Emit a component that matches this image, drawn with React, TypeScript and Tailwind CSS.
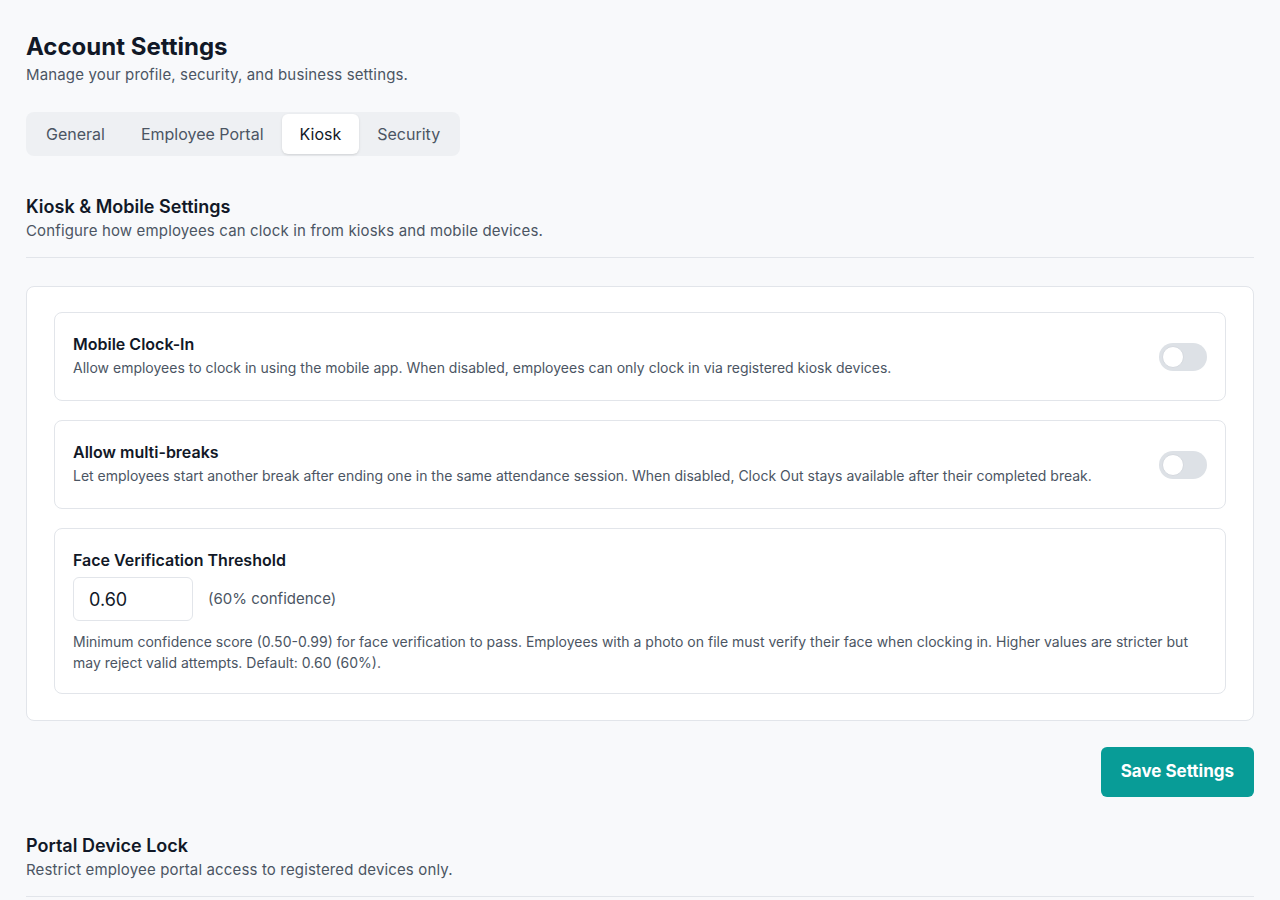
import { useState } from "react";

const tabs = ["General", "Employee Portal", "Kiosk", "Security"];

function Toggle({ on, onChange }: { on: boolean; onChange: (v: boolean) => void }) {
  return (
    <button
      type="button"
      onClick={() => onChange(!on)}
      className={`mt-1 flex h-7 w-12 shrink-0 items-center rounded-full p-[3px] ${on ? "justify-end bg-[#089c97]" : "justify-start bg-[#dde1e6]"}`}
    >
      <span className="h-[22px] w-[22px] rounded-full border border-[#d5d9df] bg-white" />
    </button>
  );
}

function ToggleRow({ title, text }: { title: string; text: string }) {
  const [on, setOn] = useState(false);
  return (
    <div className="flex items-center justify-between gap-6 rounded-lg border border-[#e2e5ea] px-[18px] pt-[19px] pb-[22px]">
      <div>
        <h3 className="text-base leading-6 font-semibold text-[#111827]">{title}</h3>
        <p className="mt-0.5 text-sm leading-5 text-[#4b5563]">{text}</p>
      </div>
      <Toggle on={on} onChange={setOn} />
    </div>
  );
}

export default function App() {
  const [active, setActive] = useState("Kiosk");
  const [threshold, setThreshold] = useState("0.60");

  return (
    <main className="min-h-screen bg-[#f8f9fb] px-[26px] pt-[31px] pb-10 font-['Inter',sans-serif] text-[#111827]">
      {/* Header */}
      <h1 className="text-2xl leading-8 font-bold">Account Settings</h1>
      <p className="mt-0.5 text-[15px] leading-5 tracking-[0.01em] text-[#4b5563]">
        Manage your profile, security, and business settings.
      </p>

      {/* Tabs */}
      <div className="mt-[27px] inline-flex rounded-lg bg-[#eef0f3] p-0.5">
        {tabs.map((t) => (
          <button
            key={t}
            onClick={() => setActive(t)}
            className={`h-10 rounded-md px-[18px] text-base ${
              active === t ? "bg-white text-[#111827] shadow-sm" : "text-[#4b5563]"
            }`}
          >
            {t}
          </button>
        ))}
      </div>

      {/* Kiosk & Mobile */}
      <section className="mt-[37px]">
        <div className="border-b border-[#e2e5ea] pb-4">
          <h2 className="text-lg leading-7 font-semibold">Kiosk &amp; Mobile Settings</h2>
          <p className="text-[15px] leading-5 tracking-[0.01em] text-[#4b5563]">
            Configure how employees can clock in from kiosks and mobile devices.
          </p>
        </div>

        <div className="mt-[28px] flex flex-col gap-[19px] rounded-lg border border-[#e2e5ea] bg-white px-[27px] pt-[25px] pb-[26px]">
          <ToggleRow
            title="Mobile Clock-In"
            text="Allow employees to clock in using the mobile app. When disabled, employees can only clock in via registered kiosk devices."
          />
          <ToggleRow
            title="Allow multi-breaks"
            text="Let employees start another break after ending one in the same attendance session. When disabled, Clock Out stays available after their completed break."
          />

          <div className="rounded-lg border border-[#e2e5ea] px-[18px] pt-[19px] pb-5">
            <h3 className="text-base leading-6 font-semibold">Face Verification Threshold</h3>
            <div className="mt-[5px] flex items-center gap-[15px]">
              <input
                value={threshold}
                onChange={(e) => setThreshold(e.target.value)}
                className="h-11 w-[120px] rounded-md border border-[#e2e5ea] px-[15px] text-lg text-[#111827] outline-none"
              />
              <span className="text-[15px] text-[#4b5563]">(60% confidence)</span>
            </div>
            <p className="mt-2.5 text-sm leading-[21px] text-[#4b5563]">
              Minimum confidence score (0.50-0.99) for face verification to pass. Employees with a photo on file must verify their face when clocking in. Higher values are stricter but may reject valid attempts. Default: 0.60 (60%).
            </p>
          </div>
        </div>

        <div className="mt-[26px] flex justify-end">
          <button className="h-[50px] rounded-md bg-[#089c97] px-5 text-[17px] font-bold text-white">
            Save Settings
          </button>
        </div>
      </section>

      {/* Portal Device Lock */}
      <section className="mt-[35px]">
        <div className="border-b border-[#e2e5ea] pb-4">
          <h2 className="text-lg leading-7 font-semibold">Portal Device Lock</h2>
          <p className="text-[15px] leading-5 tracking-[0.01em] text-[#4b5563]">
            Restrict employee portal access to registered devices only.
          </p>
        </div>
      </section>
    </main>
  );
}
